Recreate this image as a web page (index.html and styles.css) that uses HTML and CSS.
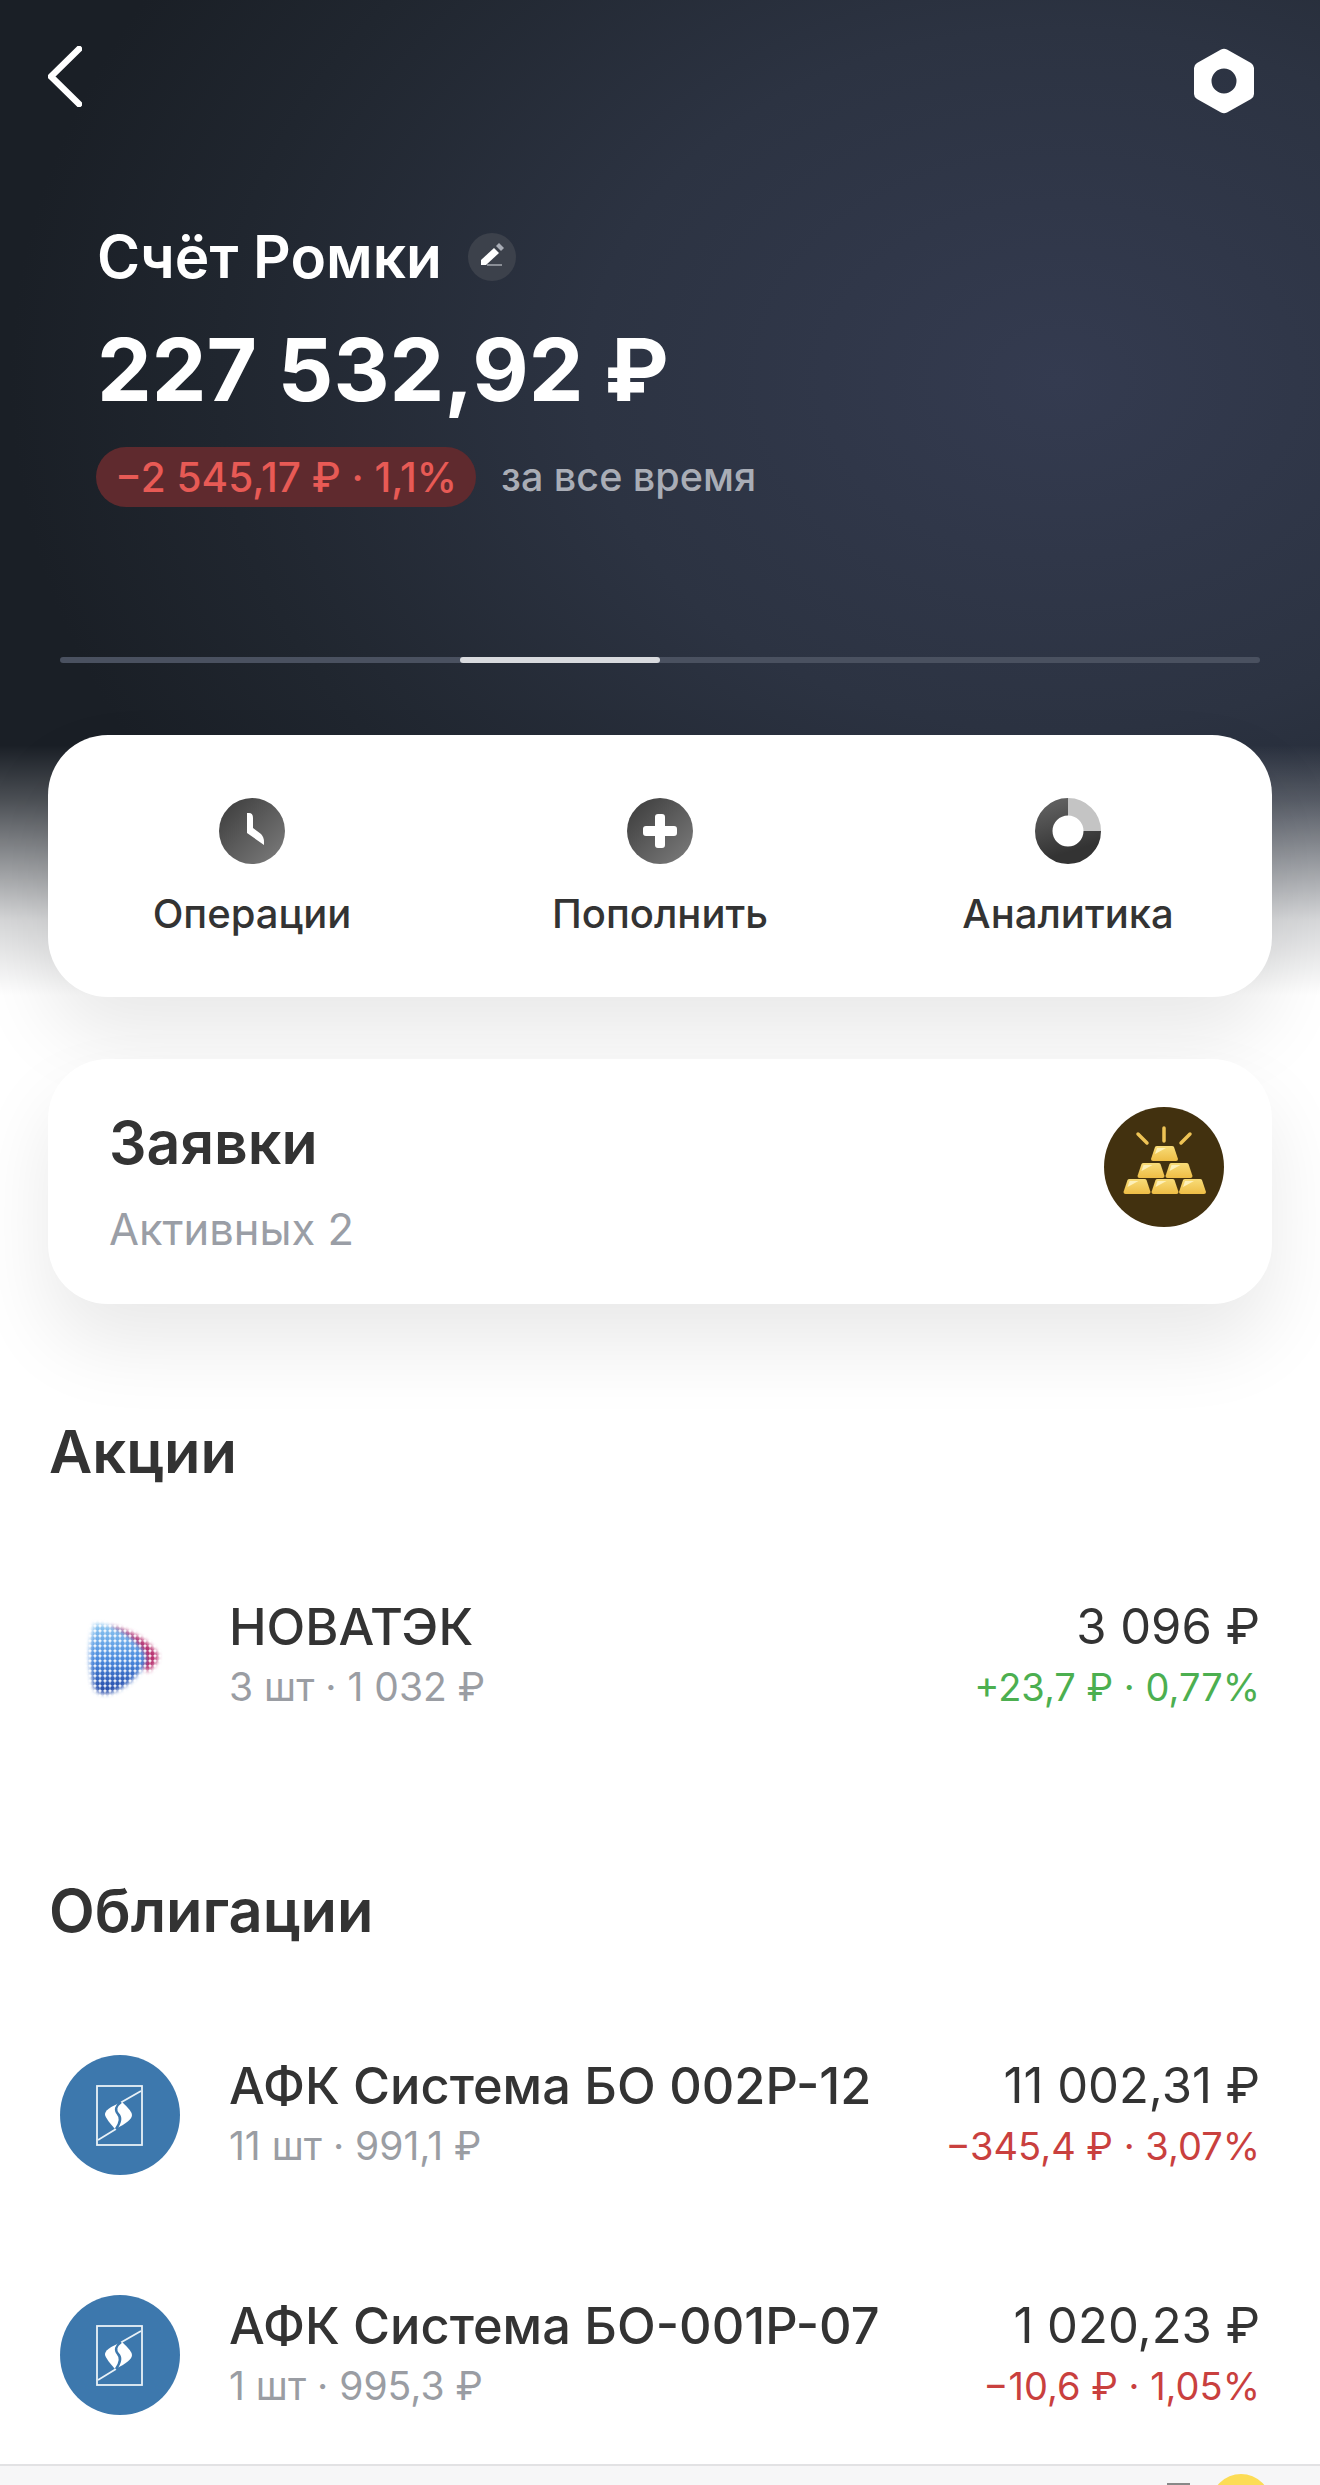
FILE: index.html
```html
<!DOCTYPE html>
<html lang="ru">
<head>
    <meta charset="UTF-8">
    <meta name="viewport" content="width=device-width, initial-scale=1.0">
    <title>Счёт Ромки</title>
    <link rel="stylesheet" href="styles.css">
</head>
<body>

    <div class="page">

        <!-- Шапка -->
        <div class="topbar">
            <svg class="back" viewBox="0 0 34 61"><path d="M31 3 L3 30.5 L31 58" fill="none" stroke="#fff" stroke-width="6.500" stroke-linecap="round" stroke-linejoin="round"/></svg>
            <svg class="nut" viewBox="0 0 60 66"><path fill="#fff" fill-rule="evenodd" d="M27 1.5 Q30 0 33 1.5 L57 15 Q60 17 60 20 V46 Q60 49 57 51 L33 64.500 Q30 66 27 64.500 L3 51 Q0 49 0 46 V20 Q0 17 3 15 Z M30 20.500 A12.500 12.500 0 1 0 30 45.500 A12.500 12.500 0 1 0 30 20.500 Z"/></svg>
        </div>

        <div class="summary">
            <div class="title-row">
                <span class="account-name">Счёт Ромки</span>
                <svg class="edit" viewBox="0 0 48 48">
                    <circle cx="24" cy="24" r="24" fill="#3c414b"/>
                    <path fill="#fff" d="M13 27 L26 15 L31 20 L18 32 H13 Z"/>
                    <path fill="#a9adb6" d="M28 13 L31 10 L36 15 L33 18 Z"/>
                    <rect x="19" y="31" width="15" height="2" fill="#8a8e96"/>
                </svg>
            </div>
            <div class="balance">227 532,92 ₽</div>
            <div class="change-row">
                <span class="change-pill">−2 545,17 ₽ · 1,1%</span>
                <span class="change-period">за все время</span>
            </div>
        </div>

        <div class="pager"><div class="pager-active"></div></div>

        <!-- Кнопки действий -->
        <div class="card actions">
            <div class="action">
                <svg class="action-icon" viewBox="0 0 66 66">
                    <defs>
                        <linearGradient id="greyGrad" x1="0" y1="0" x2="1" y2="1">
                            <stop offset="0" stop-color="#3a3a3a"/>
                            <stop offset="1" stop-color="#7e7e7e"/>
                        </linearGradient>
                    </defs>
                    <circle cx="33" cy="33" r="33" fill="url(#greyGrad)"/>
                    <path fill="#fff" d="M28 15 H30 Q34 15 34 20 V30 L42 36 Q45 39 45 44 V47 L28 35 Z"/>
                </svg>
                <span class="action-label">Операции</span>
            </div>
            <div class="action">
                <svg class="action-icon" viewBox="0 0 66 66">
                    <circle cx="33" cy="33" r="33" fill="url(#greyGrad)"/>
                    <path fill="#fff" d="M28 19 Q28 16 31 16 H35 Q38 16 38 19 V28 H47 Q50 28 50 31 V35 Q50 38 47 38 H38 V47 Q38 50 35 50 H31 Q28 50 28 47 V38 H19 Q16 38 16 35 V31 Q16 28 19 28 H28 Z"/>
                </svg>
                <span class="action-label">Пополнить</span>
            </div>
            <div class="action">
                <svg class="action-icon" viewBox="0 0 66 66">
                    <defs>
                        <linearGradient id="donutGrad" x1="0" y1="0" x2="0.300" y2="1">
                            <stop offset="0" stop-color="#5e5e5e"/>
                            <stop offset="1" stop-color="#333"/>
                        </linearGradient>
                    </defs>
                    <path d="M57.250 33 A24.250 24.250 0 1 1 33 8.750" fill="none" stroke="url(#donutGrad)" stroke-width="17.500"/>
                    <path d="M33 8.750 A24.250 24.250 0 0 1 57.250 33" fill="none" stroke="#c4c4c4" stroke-width="17.500"/>
                </svg>
                <span class="action-label">Аналитика</span>
            </div>
        </div>

        <!-- Заявки -->
        <div class="card orders">
            <div>
                <div class="orders-title">Заявки</div>
                <div class="orders-sub">Активных 2</div>
            </div>
            <svg class="logo" viewBox="0 0 120 120">
                <defs>
                    <linearGradient id="goldGrad" x1="0" y1="0" x2="0" y2="1">
                        <stop offset="0" stop-color="#f8dc78"/>
                        <stop offset="1" stop-color="#eebd45"/>
                    </linearGradient>
                    <g id="goldBar">
                        <path fill="url(#goldGrad)" d="M4 1 Q4.500 0 6 0 H21 Q22.500 0 23 1 L27 13 Q27 15 25 15 H2 Q0 15 0 13 Z"/>
                        <path fill="#fdf0b8" d="M6 2 H15 L4 8 Z"/>
                    </g>
                </defs>
                <circle cx="60" cy="60" r="60" fill="#42310f"/>
                <use href="#goldBar" x="47" y="39"/>
                <use href="#goldBar" x="33.500" y="56"/>
                <use href="#goldBar" x="61.500" y="56"/>
                <use href="#goldBar" x="19.500" y="72"/>
                <use href="#goldBar" x="47.500" y="72"/>
                <use href="#goldBar" x="75" y="72"/>
                <path d="M60 21 V34 M34 27 L43 36 M86 27 L77 36" stroke="#eec355" stroke-width="3.500" stroke-linecap="round"/>
            </svg>
        </div>

        <!-- Акции -->
        <h2 class="section-title">Акции</h2>

        <div class="row">
            <svg class="logo" viewBox="0 0 120 120">
                <defs>
                    <linearGradient id="novaBlue" x1="0" y1="0" x2="0" y2="1">
                        <stop offset="0" stop-color="#8cc6f0"/>
                        <stop offset="0.500" stop-color="#4a8ade"/>
                        <stop offset="1" stop-color="#2446a4"/>
                    </linearGradient>
                    <filter id="soft"><feGaussianBlur stdDeviation="2"/></filter>
                    <pattern id="halftone" width="5" height="5" patternUnits="userSpaceOnUse">
                        <path fill="#fff" fill-rule="evenodd" d="M0 0 H5 V5 H0 Z M2.500 0.100 A2.400 2.400 0 1 0 2.500 4.900 A2.400 2.400 0 1 0 2.500 0.100 Z"/>
                    </pattern>
                </defs>
                <path filter="url(#soft)" fill="#b8336f" d="M50 30 Q82 36 98 58 Q100 66 88 76 L70 60 Z"/>
                <path filter="url(#soft)" fill="url(#novaBlue)" d="M34 28 Q60 28 78 48 Q90 60 84 70 Q68 94 46 98 Q33 98 32 84 Q26 56 34 28 Z"/>
                <rect x="0" y="0" width="120" height="120" fill="url(#halftone)"/>
            </svg>
            <div class="info">
                <div class="name">НОВАТЭК</div>
                <div class="sub">3 шт · 1 032 ₽</div>
            </div>
            <div class="value">
                <div class="price">3 096 ₽</div>
                <div class="delta up">+23,7 ₽ · 0,77%</div>
            </div>
        </div>

        <!-- Облигации -->
        <h2 class="section-title bonds-title">Облигации</h2>

        <div class="row">
            <svg class="logo" viewBox="0 0 120 120">
                <defs>
                    <g id="sistema">
                        <circle cx="60" cy="60" r="60" fill="#3d78ad"/>
                        <rect x="37" y="31" width="45" height="59" fill="none" stroke="#e8f1f7" stroke-width="1.800"/>
                        <path d="M81 36 L60 48 M38 85 L56 74" stroke="#e8f1f7" stroke-width="1.800" fill="none"/>
                        <path fill="#fff" d="M62 47 Q44 54 45 60 Q46 64 55 74 Q72 66 72 60 Q72 56 62 47 Z"/>
                        <path d="M61 47 Q53 53 58 59 Q63 64 56 74" stroke="#3d78ad" stroke-width="2.500" fill="none"/>
                    </g>
                </defs>
                <use href="#sistema"/>
            </svg>
            <div class="info">
                <div class="name">АФК Система БО 002Р-12</div>
                <div class="sub">11 шт · 991,1 ₽</div>
            </div>
            <div class="value">
                <div class="price">11 002,31 ₽</div>
                <div class="delta down">−345,4 ₽ · 3,07%</div>
            </div>
        </div>

        <div class="row row-next">
            <svg class="logo" viewBox="0 0 120 120"><use href="#sistema"/></svg>
            <div class="info">
                <div class="name">АФК Система БО-001Р-07</div>
                <div class="sub">1 шт · 995,3 ₽</div>
            </div>
            <div class="value">
                <div class="price">1 020,23 ₽</div>
                <div class="delta down">−10,6 ₽ · 1,05%</div>
            </div>
        </div>

        <!-- Нижняя панель, видна только верхушка -->
        <div class="tabbar">
            <div class="tab-grey"></div>
            <div class="tab-yellow"></div>
        </div>
    </div>

</body>
</html>
```

FILE: styles.css
```css
* {
    box-sizing: border-box;
}
body {
    margin: 0;
    font-family: Inter, "Noto Sans", sans-serif;
    color: #333;
    background-color: #fff;
}
.page {
    width: 1320px;
    height: 2485px;
    overflow: hidden;
    background-color: #fff;
    background-image:
        linear-gradient(to bottom, rgba(255,255,255,0) 745px, rgba(255,255,255,0.22) 800px, rgba(255,255,255,0.52) 860px, rgba(255,255,255,0.82) 920px, #fff 995px),
        radial-gradient(ellipse 1050px 780px at 1060px 380px, #343b50 0, #2c3342 45%, #20262f 80%, #1a1f26 100%);
    background-size: 100% 1000px;
    background-repeat: no-repeat;
}
.topbar {
    display: flex;
    justify-content: space-between;
    align-items: flex-start;
    padding: 46px 66px 0 48px;
}
.back {
    width: 34px;
    height: 61px;
}
.nut {
    width: 60px;
    height: 66px;
    margin-top: 2px;
}
.summary {
    margin-top: 113px;
    padding-left: 97px;
    color: #fff;
}
.title-row {
    display: flex;
    align-items: center;
    height: 60px;
}
.account-name {
    font-size: 58.500px;
    font-weight: 600;
    line-height: 60px;
}
.edit {
    width: 48px;
    height: 48px;
    margin-left: 26px;
}
.balance {
    margin-top: 33px;
    font-size: 87px;
    font-weight: 700;
    line-height: 100px;
    white-space: nowrap;
}
.change-row {
    display: flex;
    align-items: center;
    margin-top: 27px;
    margin-left: -1px;
}
.change-pill {
    display: flex;
    align-items: center;
    height: 60px;
    padding: 0 19px;
    border-radius: 30px;
    background-color: #5f2a2e;
    color: #e85a55;
    font-size: 40.500px;
    font-weight: 500;
    white-space: nowrap;
}
.change-period {
    margin-left: 25px;
    font-size: 39.500px;
    font-weight: 500;
    color: #a9adb6;
}
.pager {
    height: 6px;
    margin: 150px 60px 0;
    border-radius: 3px;
    background-color: #4a5160;
}
.pager-active {
    width: 200px;
    height: 6px;
    margin-left: 400px;
    border-radius: 3px;
    background-color: #d8dade;
}
.card {
    margin: 0 48px;
    border-radius: 60px;
    background-color: #fff;
    box-shadow: 0 40px 80px rgba(0, 0, 0, 0.09);
}
.actions {
    display: grid;
    grid-template-columns: repeat(3, 1fr);
    height: 262px;
    margin-top: 72px;
    padding-top: 63px;
}
.action {
    display: flex;
    flex-direction: column;
    align-items: center;
}
.action-icon {
    width: 66px;
    height: 66px;
}
.action-label {
    margin-top: 25px;
    font-size: 40px;
    font-weight: 500;
    line-height: 50px;
}
.orders {
    display: flex;
    justify-content: space-between;
    align-items: flex-start;
    height: 245px;
    margin-top: 62px;
    padding: 48px 48px 0 61px;
}
.orders-title {
    font-size: 59px;
    font-weight: 600;
    line-height: 72px;
}
.orders-sub {
    margin-top: 25px;
    font-size: 43.500px;
    line-height: 50px;
    color: #9a9ea6;
}
.logo {
    flex: none;
    width: 120px;
    height: 120px;
}
.section-title {
    margin: 112px 0 0;
    padding-left: 49px;
    font-size: 59.500px;
    font-weight: 600;
    line-height: 70px;
}
.bonds-title {
    margin-top: 159px;
}
.row {
    display: flex;
    align-items: flex-start;
    height: 120px;
    margin-top: 110px;
    padding: 0 60px;
}
.row-next {
    margin-top: 120px;
}
.info {
    flex: 1;
    margin-top: 1px;
    margin-left: 49px;
}
.name, .price {
    font-size: 50.500px;
    font-weight: 500;
    line-height: 60px;
    white-space: nowrap;
}
.sub, .delta {
    margin-top: 8px;
    font-size: 39px;
    line-height: 44px;
    white-space: nowrap;
}
.sub {
    color: #9a9da3;
}
.value {
    margin-top: 1px;
    text-align: right;
}
.price {
    font-size: 49px;
    font-weight: 400;
}
.delta {
    font-size: 38px;
}
.up {
    color: #4caf50;
}
.down {
    color: #c9403e;
}
.tabbar {
    display: flex;
    justify-content: flex-end;
    align-items: flex-start;
    height: 21px;
    margin-top: 49px;
    padding-right: 49px;
    overflow: hidden;
    border-top: 2px solid #e2e2e4;
    background-color: #f6f6f7;
}
.tab-grey {
    width: 23px;
    height: 10px;
    margin-top: 17px;
    margin-right: 21px;
    background-color: #888;
}
.tab-yellow {
    width: 60px;
    height: 60px;
    margin-top: 8px;
    border-radius: 50%;
    background-color: #fcdc55;
}
```
